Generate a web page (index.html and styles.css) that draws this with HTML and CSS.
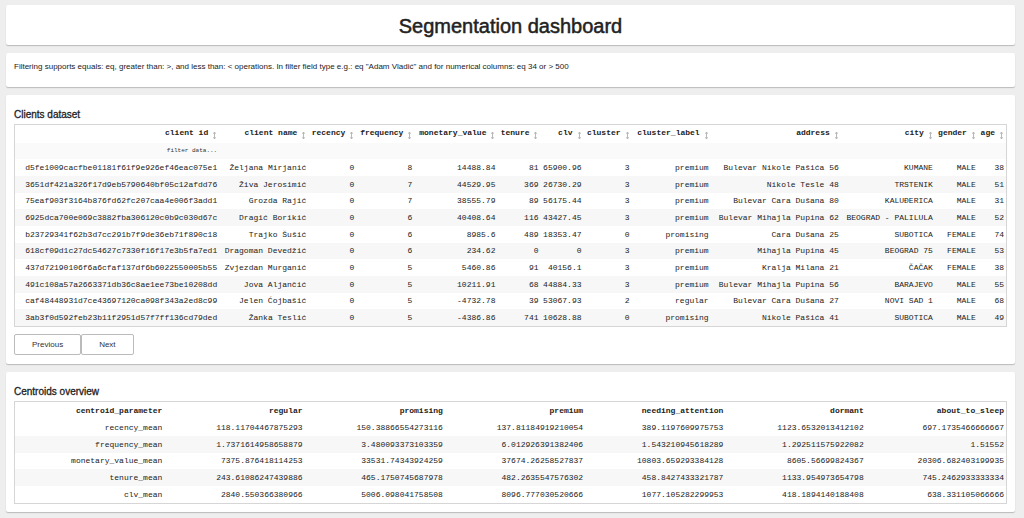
FILE: index.html
```html
<!DOCTYPE html>
<html lang="en">
<head>
<meta charset="utf-8">
<meta name="viewport" content="width=device-width, initial-scale=1">
<title>Segmentation dashboard</title>
<link rel="stylesheet" href="styles.css">
</head>
<body>
<svg class="defs" aria-hidden="true"><symbol id="sort" viewBox="0 0 5 7"><path d="M1 1.5 L2.5 .5 L4 1.5 M2.5 .5 V6.5 M1 5.5 L2.5 6.5 L4 5.5" fill="none" stroke="#999" stroke-width=".7"/></symbol></svg>
<main class="page">
<header class="card title-card"><h1>Segmentation dashboard</h1></header>
<section class="card note-card"><p>Filtering supports equals: eq, greater than: &gt;, and less than: &lt; operations. In filter field type e.g.: eq "Adam Vladić" and for numerical columns: eq 34 or &gt; 500</p></section>
<section class="card data-card">
<h2 id="clients">Clients dataset</h2>
<div class="frame">
<table class="grid clients" aria-labelledby="clients">
<colgroup><col class="w-id"><col class="w-name"><col class="w-rec"><col class="w-freq"><col class="w-money"><col class="w-tenure"><col class="w-clv"><col class="w-cluster"><col class="w-label"><col class="w-address"><col class="w-city"><col class="w-gender"><col class="w-age"></colgroup>
<thead>
<tr class="names">
<th scope="col"><button class="sort">client id<svg><use href="#sort"/></svg></button></th>
<th scope="col"><button class="sort">client name<svg><use href="#sort"/></svg></button></th>
<th scope="col"><button class="sort">recency<svg><use href="#sort"/></svg></button></th>
<th scope="col"><button class="sort">frequency<svg><use href="#sort"/></svg></button></th>
<th scope="col"><button class="sort">monetary_value<svg><use href="#sort"/></svg></button></th>
<th scope="col"><button class="sort">tenure<svg><use href="#sort"/></svg></button></th>
<th scope="col"><button class="sort">clv<svg><use href="#sort"/></svg></button></th>
<th scope="col"><button class="sort">cluster<svg><use href="#sort"/></svg></button></th>
<th scope="col"><button class="sort">cluster_label<svg><use href="#sort"/></svg></button></th>
<th scope="col"><button class="sort">address<svg><use href="#sort"/></svg></button></th>
<th scope="col"><button class="sort">city<svg><use href="#sort"/></svg></button></th>
<th scope="col"><button class="sort">gender<svg><use href="#sort"/></svg></button></th>
<th scope="col"><button class="sort">age<svg><use href="#sort"/></svg></button></th>
</tr>
<tr class="filters">
<td><input type="text" placeholder="filter data..." aria-label="Filter client id"></td>
<td><input type="text" aria-label="Filter client name"></td>
<td><input type="text" aria-label="Filter recency"></td>
<td><input type="text" aria-label="Filter frequency"></td>
<td><input type="text" aria-label="Filter monetary_value"></td>
<td><input type="text" aria-label="Filter tenure"></td>
<td><input type="text" aria-label="Filter clv"></td>
<td><input type="text" aria-label="Filter cluster"></td>
<td><input type="text" aria-label="Filter cluster_label"></td>
<td><input type="text" aria-label="Filter address"></td>
<td><input type="text" aria-label="Filter city"></td>
<td><input type="text" aria-label="Filter gender"></td>
<td><input type="text" aria-label="Filter age"></td>
</tr>
</thead>
<tbody>
<tr><td>d5fe1009cacfbe01181f61f9e926ef46eac075e1</td><td>Željana Mirjanić</td><td>0</td><td>8</td><td>14488.84</td><td>81</td><td>65900.96</td><td>3</td><td>premium</td><td>Bulevar Nikole Pašića 56</td><td>KUMANE</td><td>MALE</td><td>38</td></tr>
<tr><td>3651df421a326f17d9eb5790640bf05c12afdd76</td><td>Živa Jerosimić</td><td>0</td><td>7</td><td>44529.95</td><td>369</td><td>26730.29</td><td>3</td><td>premium</td><td>Nikole Tesle 48</td><td>TRSTENIK</td><td>MALE</td><td>51</td></tr>
<tr><td>75eaf903f3164b876fd62fc207caa4e006f3add1</td><td>Grozda Rajić</td><td>0</td><td>7</td><td>38555.79</td><td>89</td><td>56175.44</td><td>3</td><td>premium</td><td>Bulevar Cara Dušana 80</td><td>KALUĐERICA</td><td>MALE</td><td>31</td></tr>
<tr><td>6925dca700e069c3882fba306120c0b9c030d67c</td><td>Dragić Borikić</td><td>0</td><td>6</td><td>40408.64</td><td>116</td><td>43427.45</td><td>3</td><td>premium</td><td>Bulevar Mihajla Pupina 62</td><td>BEOGRAD - PALILULA</td><td>MALE</td><td>52</td></tr>
<tr><td>b23729341f62b3d7cc291b7f9de36eb71f890c18</td><td>Trajko Šušić</td><td>0</td><td>6</td><td>8985.6</td><td>489</td><td>18353.47</td><td>0</td><td>promising</td><td>Cara Dušana 25</td><td>SUBOTICA</td><td>FEMALE</td><td>74</td></tr>
<tr><td>618cf09d1c27dc54627c7330f16f17e3b5fa7ed1</td><td>Dragoman Devedžić</td><td>0</td><td>6</td><td>234.62</td><td>0</td><td>0</td><td>3</td><td>premium</td><td>Mihajla Pupina 45</td><td>BEOGRAD 75</td><td>FEMALE</td><td>53</td></tr>
<tr><td>437d72190106f6a6cfaf137df6b6022550005b55</td><td>Zvjezdan Murganić</td><td>0</td><td>5</td><td>5460.86</td><td>91</td><td>40156.1</td><td>3</td><td>premium</td><td>Kralja Milana 21</td><td>ČAČAK</td><td>FEMALE</td><td>38</td></tr>
<tr><td>491c108a57a2663371db36c8ae1ee73be10208dd</td><td>Jova Aljančić</td><td>0</td><td>5</td><td>10211.91</td><td>68</td><td>44884.33</td><td>3</td><td>premium</td><td>Bulevar Mihajla Pupina 56</td><td>BARAJEVO</td><td>MALE</td><td>55</td></tr>
<tr><td>caf48448931d7ce43697120ca098f343a2ed8c99</td><td>Jelen Ćojbašić</td><td>0</td><td>5</td><td>-4732.78</td><td>39</td><td>53067.93</td><td>2</td><td>regular</td><td>Bulevar Cara Dušana 27</td><td>NOVI SAD 1</td><td>MALE</td><td>68</td></tr>
<tr><td>3ab3f0d592feb23b11f2951d57f7ff136cd79ded</td><td>Žanka Teslić</td><td>0</td><td>5</td><td>-4386.86</td><td>741</td><td>10628.88</td><td>0</td><td>promising</td><td>Nikole Pašića 41</td><td>SUBOTICA</td><td>MALE</td><td>49</td></tr>
</tbody>
</table>
</div>
<div class="pager"><button>Previous</button><button>Next</button></div>
</section>
<section class="card data-card">
<h2 id="centroids">Centroids overview</h2>
<div class="frame">
<table class="grid centroids" aria-labelledby="centroids">
<colgroup><col class="w-param"><col span="6" class="w-value"></colgroup>
<thead><tr><th scope="col">centroid_parameter</th><th scope="col">regular</th><th scope="col">promising</th><th scope="col">premium</th><th scope="col">needing_attention</th><th scope="col">dormant</th><th scope="col">about_to_sleep</th></tr></thead>
<tbody>
<tr><td>recency_mean</td><td>118.11704467875293</td><td>150.38866554273116</td><td>137.81184919210054</td><td>389.1197609975753</td><td>1123.6532013412102</td><td>697.1735466666667</td></tr>
<tr><td>frequency_mean</td><td>1.7371614958658879</td><td>3.480093373103359</td><td>6.012926391382406</td><td>1.543210945618289</td><td>1.292511575922082</td><td>1.51552</td></tr>
<tr><td>monetary_value_mean</td><td>7375.876418114253</td><td>33531.74343924259</td><td>37674.26258527837</td><td>10803.659293384128</td><td>8605.56699824367</td><td>20306.682403199935</td></tr>
<tr><td>tenure_mean</td><td>243.61086247439886</td><td>465.1750745687978</td><td>482.2635547576302</td><td>458.8427433321787</td><td>1133.954973654798</td><td>745.2462933333334</td></tr>
<tr><td>clv_mean</td><td>2840.550366380966</td><td>5006.098041758508</td><td>8096.777030520666</td><td>1077.105282299953</td><td>418.1894140188408</td><td>638.331105066666</td></tr>
</tbody>
</table>
</div>
</section>
</main>
</body>
</html>
```
FILE: styles.css
```css
* { box-sizing: border-box; }
body { margin: 0; background: #eee; color: #222; font-family: "Liberation Sans", Arial, sans-serif; font-size: 8px; }
.defs { position: absolute; width: 0; height: 0; }
.page { display: flex; flex-direction: column; gap: 8px; padding: 5px 9px 6px 6px; }
.card { background: #fff; border-radius: 2px; box-shadow: 0 1px 1px #bbb; padding: 0 8px; }
h1, h2, p { margin: 0; }
.title-card { padding: 9px 8px 7px; }
h1 { font-size: 20px; line-height: 24px; font-weight: 400; text-align: center; -webkit-text-stroke: 0.5px #222; }
.note-card { padding: 9px 8px 15px; }
p { line-height: 10px; }
.data-card { padding: 14px 8px 8px; }
h2 { font-size: 10px; line-height: 12px; font-weight: 400; margin-bottom: 3px; -webkit-text-stroke: 0.3px #222; }
.frame { border: 1px solid #d6d6d6; }
.grid { width: 100%; table-layout: fixed; border-collapse: collapse; font-family: "Liberation Mono", "Courier New", monospace; font-size: 8px; line-height: 10px; }
th, td { padding: 0 2px; text-align: right; white-space: nowrap; }
tbody tr { height: 17px; }
tbody tr:nth-child(3n) { height: 16px; }
tbody tr:nth-child(even) { background: #f7f7f7; }
.names { height: 18px; }
.filters { height: 16px; background: #fafafa; }
.centroids thead tr { height: 17px; }
.sort { display: inline-flex; gap: 4px; padding: 0; border: 0; background: none; color: inherit; font: inherit; vertical-align: middle; }
.names th { padding-bottom: 2px; }
.sort svg { width: 5px; height: 7px; margin-top: 4px; }
.filters input { display: block; width: 100%; padding: 0; border: 0; outline: 0; background: none; text-align: right; font-family: inherit; font-size: 6px; line-height: 10px; }
.filters input::placeholder { color: #333; opacity: 1; }
.w-id { width: 204px; }
.w-name { width: 89px; }
.w-rec, .w-cluster { width: 48px; }
.w-freq { width: 58px; }
.w-money { width: 83px; }
.w-tenure, .w-clv { width: 43px; }
.w-label { width: 79px; }
.w-address { width: 130px; }
.w-city { width: 94px; }
.w-gender { width: 43px; }
.w-age { width: 28px; }
.w-param { width: 149px; }
.w-value { width: 140px; }
.pager { display: flex; margin-top: 7px; padding-bottom: 1px; }
.pager button { height: 21px; padding: 0 17px; border: 1px solid #bbb; border-radius: 2px; background: #fff; color: #333; font-family: inherit; font-size: 8px; }
```
